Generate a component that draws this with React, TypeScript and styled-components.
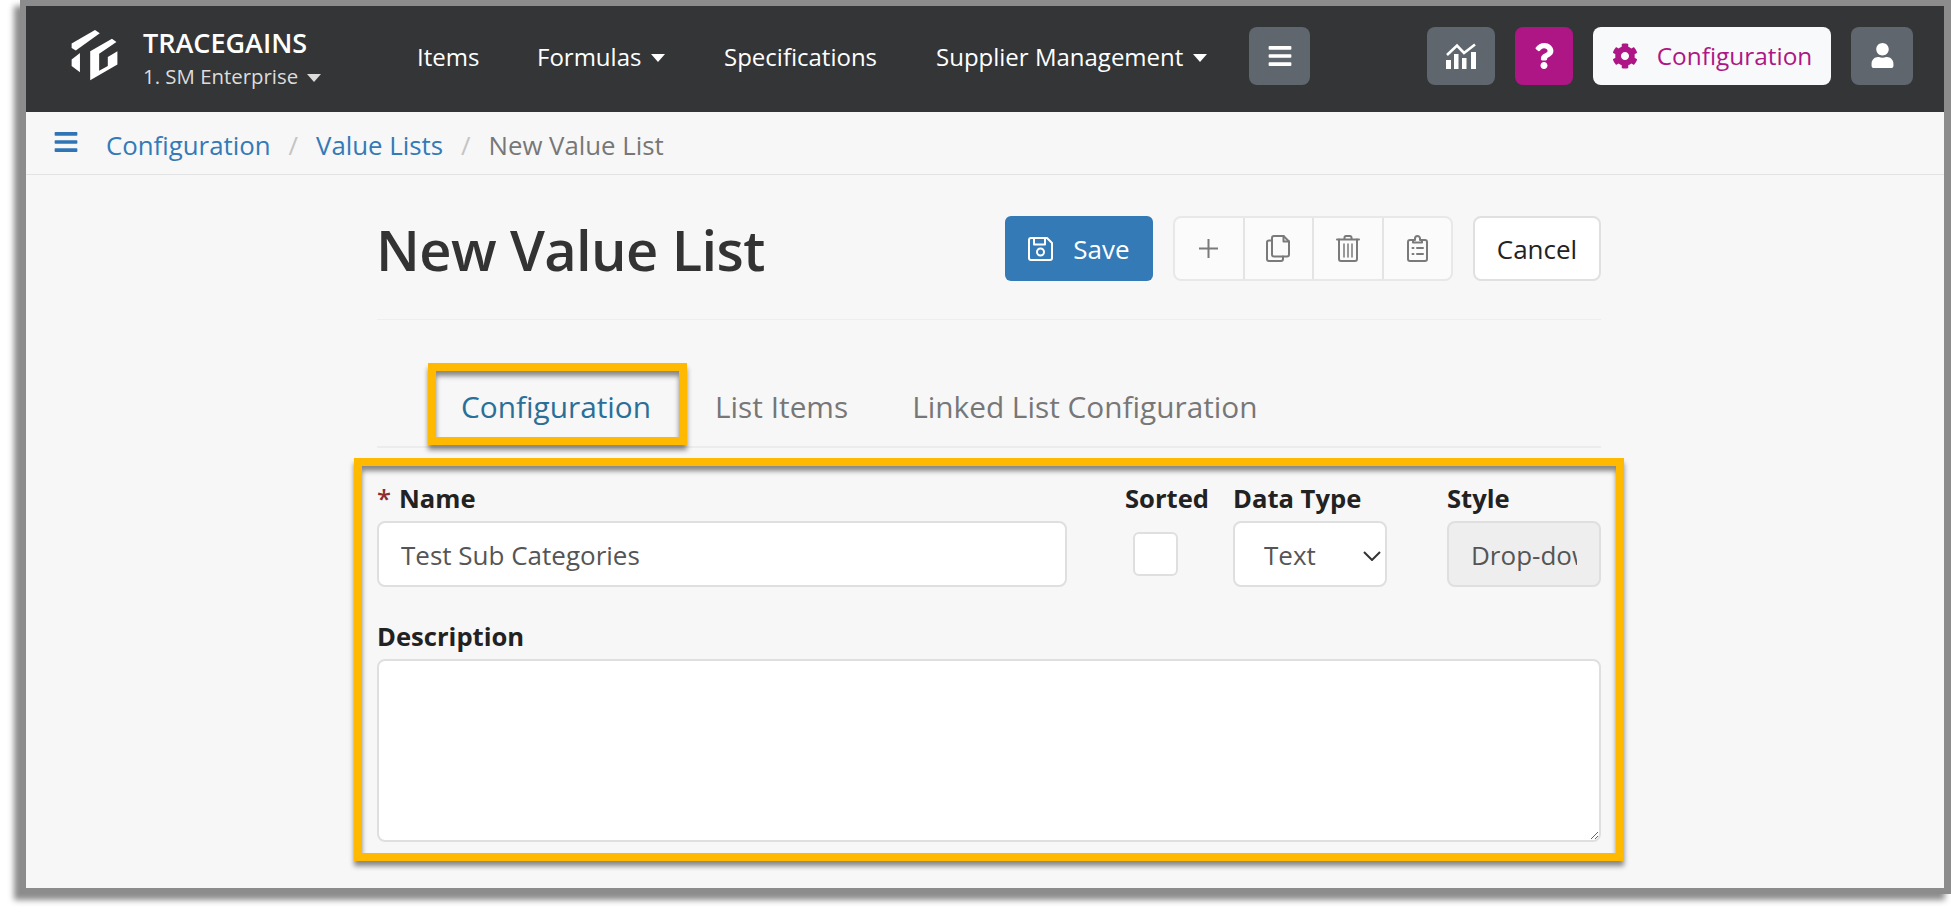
import React from "react";
import styled, { createGlobalStyle } from "styled-components";
import { FaBars, FaCog, FaQuestion, FaUser } from "react-icons/fa";

const font = `"Open Sans", "Noto Sans", sans-serif`;

const GlobalStyle = createGlobalStyle`
  html, body {
    margin: 0;
    background: #fff;
    font-family: ${font};
    overflow: hidden;
  }
`;

const Page = styled.div`
  width: 1951px;
  height: 914px;
  padding-left: 20px;
  box-sizing: border-box;
`;

const Frame = styled.div`
  width: 1931px;
  height: 894px;
  box-sizing: border-box;
  border: 6px solid #8c8c8c;
  border-right-width: 7px;
  background: #f7f7f7;
  box-shadow: -6px 6px 6px rgba(0, 0, 0, 0.45);
  display: flex;
  flex-direction: column;
`;

const Header = styled.header`
  height: 106px;
  flex: none;
  box-sizing: border-box;
  background: #343537;
  display: flex;
  align-items: center;
  color: #fff;
  padding: 0 31px 7px 45px;
`;

const Brand = styled.div`
  display: flex;
  align-items: center;
  gap: 24px;
  width: 346px;
  flex: none;
`;

const BrandText = styled.div`
  display: flex;
  flex-direction: column;
  gap: 3px;
  margin-top: 6px;
`;

const BrandName = styled.div`
  font-size: 27px;
  line-height: 32px;
  font-weight: 600;
`;

const BrandSub = styled.div`
  font-size: 20.4px;
  line-height: 28px;
  color: #dcdcdc;
  display: flex;
  align-items: center;
  gap: 9px;
`;

const Caret = styled.span`
  display: inline-block;
  flex: none;
  width: 0;
  height: 0;
  margin-top: 3px;
  border-left: 7.5px solid transparent;
  border-right: 7.5px solid transparent;
  border-top: 8px solid currentColor;
`;

const Nav = styled.nav`
  display: flex;
  align-items: center;
`;

const NavLink = styled.a<{ $width: number }>`
  width: ${(p) => p.$width}px;
  flex: none;
  margin-top: 2px;
  font-size: 24px;
  color: #fff;
  display: flex;
  align-items: center;
  gap: 10px;
  white-space: nowrap;
`;

const IconButton = styled.button<{ $width: number; $color?: string }>`
  width: ${(p) => p.$width}px;
  height: 58px;
  flex: none;
  border: 0;
  border-radius: 8px;
  padding: 0;
  background: ${(p) => p.$color || "#5f666d"};
  color: #fff;
  display: flex;
  align-items: center;
  justify-content: center;
`;

const HeaderRight = styled.div`
  margin-left: auto;
  display: flex;
  align-items: center;
  gap: 20px;
`;

const ConfigButton = styled.button`
  width: 238px;
  height: 58px;
  border: 0;
  border-radius: 8px;
  background: #f8f9fa;
  color: #ae1685;
  font-family: ${font};
  font-size: 24.4px;
  display: flex;
  align-items: center;
  justify-content: center;
  gap: 19px;
  padding: 0;
`;

const Breadcrumbs = styled.div`
  height: 63px;
  flex: none;
  box-sizing: border-box;
  border-bottom: 1px solid #e3e3e3;
  padding: 4px 0 0 27px;
  display: flex;
  align-items: center;
  font-size: 25.8px;
`;

const CrumbToggle = styled.span`
  color: #2f75b5;
  display: flex;
  margin-right: 27px;
  margin-top: -7px;
`;

const CrumbLink = styled.a`
  color: #337ab7;
`;

const CrumbSep = styled.span`
  color: #c4c4c4;
  margin: 0 18px;
`;

const CrumbCurrent = styled.span`
  color: #777;
`;

const Main = styled.main`
  width: 1224px;
  margin-left: 351px;
  display: flex;
  flex-direction: column;
`;

const TitleRow = styled.div`
  height: 145px;
  box-sizing: border-box;
  border-bottom: 1px solid #eeeeee;
  padding-top: 41px;
  display: flex;
  align-items: flex-start;
  justify-content: space-between;
`;

const Title = styled.h1`
  margin: -3px 0 0 -1px;
  font-size: 56px;
  line-height: 72px;
  font-weight: 600;
  color: #333;
  letter-spacing: -0.6px;
`;

const Actions = styled.div`
  display: flex;
  align-items: stretch;
  height: 65px;
`;

const SaveButton = styled.button`
  width: 148px;
  border: 0;
  border-radius: 6px;
  background: #337ab7;
  color: #fff;
  font-family: ${font};
  font-size: 26px;
  display: flex;
  align-items: center;
  justify-content: center;
  gap: 20px;
  padding: 0;
  margin-right: 20px;
`;

const ToolGroup = styled.div`
  display: flex;
  box-sizing: border-box;
  width: 280px;
  border: 2px solid #e8e8e8;
  border-radius: 8px;
  background: #fbfbfb;
  margin-right: 20px;
`;

const ToolButton = styled.button`
  flex: 1;
  border: 0;
  background: transparent;
  padding: 0;
  display: flex;
  align-items: center;
  justify-content: center;
  & + & {
    border-left: 2px solid #e4e4e4;
  }
`;

const CancelButton = styled.button`
  width: 128px;
  box-sizing: border-box;
  border: 2px solid #e0e0e0;
  border-radius: 8px;
  background: #fff;
  color: #222;
  font-family: ${font};
  font-size: 26px;
  padding: 0;
`;

const Tabs = styled.div`
  height: 128px;
  box-sizing: border-box;
  border-bottom: 2px solid #ececec;
  padding: 58px 0 0 84px;
  display: flex;
  align-items: flex-start;
  gap: 64px;
`;

const Tab = styled.div<{ $active?: boolean }>`
  position: relative;
  font-size: 29.8px;
  line-height: 58px;
  color: ${(p) => (p.$active ? "#2a6f97" : "#777")};
  white-space: nowrap;
`;

const Highlight = styled.div`
  position: absolute;
  box-sizing: border-box;
  border: 8px solid #ffb900;
  box-shadow: 0 5px 5px rgba(0, 0, 0, 0.45), inset 0 5px 5px rgba(0, 0, 0, 0.45);
  pointer-events: none;
`;

const TabHighlight = styled(Highlight)`
  left: -33px;
  right: -36px;
  top: -15px;
  bottom: -9px;
`;

const Form = styled.form`
  position: relative;
  display: flex;
  flex-direction: column;
  padding-top: 35px;
`;

const FormHighlight = styled(Highlight)`
  left: -23px;
  right: -23px;
  top: 10px;
  height: 403px;
`;

const TopFields = styled.div`
  display: flex;
  align-items: flex-start;
`;

const Field = styled.div<{ $width: number; $left?: number }>`
  width: ${(p) => p.$width}px;
  margin-left: ${(p) => p.$left || 0}px;
  flex: none;
  display: flex;
  flex-direction: column;
`;

const Label = styled.label`
  font-size: 25.6px;
  line-height: 32px;
  font-weight: 700;
  color: #222;
  margin-bottom: 6px;
  white-space: nowrap;
`;

const Required = styled.span`
  color: #8f2d2d;
  margin-right: 8px;
  font-weight: 600;
`;

const inputBase = `
  box-sizing: border-box;
  width: 100%;
  height: 66px;
  border: 2px solid #dfdfdf;
  border-radius: 8px;
  background: #fff;
  font-family: ${font};
  font-size: 26px;
  color: #555;
  padding: 2px 22px 0;
  outline: none;
`;

const TextInput = styled.input`
  ${inputBase}
`;

const ReadonlyInput = styled.input`
  ${inputBase}
  background: #eeeeee;
`;

const SelectWrap = styled.div`
  position: relative;
`;

const Select = styled.select`
  ${inputBase}
  appearance: none;
  padding: 2px 0 0 29px;
`;

const SelectChevron = styled.svg`
  position: absolute;
  right: 6px;
  top: 30px;
  pointer-events: none;
`;

const CheckboxWrap = styled.div`
  height: 66px;
  display: flex;
  align-items: center;
  padding-left: 8px;
`;

const Checkbox = styled.input`
  appearance: none;
  margin: 0;
  width: 45px;
  height: 44px;
  box-sizing: border-box;
  border: 2px solid #dfdfdf;
  border-radius: 6px;
  background: #fff;
`;

const DescriptionField = styled.div`
  display: flex;
  flex-direction: column;
  margin-top: 34px;
`;

const TextArea = styled.textarea`
  ${inputBase}
  height: 183px;
  display: block;
`;

const ToolIcon = styled.svg`
  fill: none;
  stroke: #7a7a7a;
  stroke-width: 2;
  stroke-linecap: round;
  stroke-linejoin: round;
`;

const Logo = () => (
  <svg width="48" height="53" viewBox="90 55 150 165" fill="#fff">
    <path d="M92 100 165 58 180 68 105 122 92 114Z" />
    <path d="M92 150 118 130V190L92 170Z" />
    <path d="M150 124 218 85 232 95 178 132V185L205 170V142L235 124V166L150 215Z" />
  </svg>
);

const ChartIcon = () => (
  <svg width="30" height="26" viewBox="0 0 30 26" fill="#fff">
    <path d="M1 12 11 2.500 18 10 29 1.500" fill="none" stroke="#fff" strokeWidth="2.600" />
    <rect x="0" y="17" width="5" height="9" />
    <rect x="8" y="11" width="4.500" height="15" />
    <rect x="16" y="15" width="4.500" height="11" />
    <rect x="25" y="9" width="5" height="17" />
  </svg>
);

const SaveGlyph = () => (
  <svg width="25" height="24" viewBox="0 0 25 24" fill="none" stroke="#fff" strokeWidth="2" strokeLinejoin="round">
    <path d="M3 1H19L24 6V21A2 2 0 0 1 22 23H3A2 2 0 0 1 1 21V3A2 2 0 0 1 3 1Z" />
    <path d="M6 1V7.500H17V1" />
    <circle cx="12.500" cy="15" r="3.500" />
  </svg>
);

const PlusIcon = () => (
  <ToolIcon width="21" height="21" viewBox="0 0 21 21" strokeWidth="2.4">
    <path d="M10.500 1V20M1 10.500H20" strokeLinecap="butt" />
  </ToolIcon>
);

const CopyIcon = () => (
  <ToolIcon width="24" height="27" viewBox="0 0 24 27">
    <path d="M6 19.500V3A2 2 0 0 1 8 1H17.500L23 6.500V19.500A2 2 0 0 1 21 21.500H8A2 2 0 0 1 6 19.500Z" />
    <path d="M17.500 1V6.500H23" />
    <path d="M6 5.500H3A2 2 0 0 0 1 7.500V24A2 2 0 0 0 3 26H15A2 2 0 0 0 17 24V21.500" />
  </ToolIcon>
);

const TrashIcon = () => (
  <ToolIcon width="24" height="27" viewBox="0 0 24 27">
    <path d="M1 4.500H23M8.500 4.500V2.500A1.500 1.500 0 0 1 10 1H14A1.500 1.500 0 0 1 15.500 2.500V4.500" />
    <path d="M3 4.500V24A2 2 0 0 0 5 26H19A2 2 0 0 0 21 24V4.500" />
    <path d="M8 9V22M12 9V22M16 9V22" strokeWidth="1.500" />
  </ToolIcon>
);

const ClipboardIcon = () => (
  <ToolIcon width="21" height="27" viewBox="0 0 21 27">
    <path d="M6 5H3A2 2 0 0 0 1 7V24A2 2 0 0 0 3 26H18A2 2 0 0 0 20 24V7A2 2 0 0 0 18 5H15" />
    <path d="M6 7.500V5H8V3.500A2.500 2.500 0 0 1 13 3.500V5H15V7.500Z" />
    <path d="M5.500 13H6.500M10 13H16M5.500 19H6.500M10 19H16" />
  </ToolIcon>
);

export default function App() {
  return (
    <>
      <GlobalStyle />
      <Page>
        <Frame>
          <Header>
            <Brand>
              <Logo />
              <BrandText>
                <BrandName>TRACEGAINS</BrandName>
                <BrandSub>
                  1. SM Enterprise <Caret />
                </BrandSub>
              </BrandText>
            </Brand>
            <Nav>
              <NavLink $width={120}>Items</NavLink>
              <NavLink $width={187}>
                Formulas <Caret />
              </NavLink>
              <NavLink $width={212}>Specifications</NavLink>
              <NavLink $width={313}>
                Supplier Management <Caret />
              </NavLink>
              <IconButton $width={61}>
                <FaBars size={26} />
              </IconButton>
            </Nav>
            <HeaderRight>
              <IconButton $width={68}>
                <ChartIcon />
              </IconButton>
              <IconButton $width={58} $color="#ae1685">
                <FaQuestion size={26} />
              </IconButton>
              <ConfigButton>
                <FaCog size={26} />
                Configuration
              </ConfigButton>
              <IconButton $width={62}>
                <FaUser size={25} />
              </IconButton>
            </HeaderRight>
          </Header>
          <Breadcrumbs>
            <CrumbToggle>
              <FaBars size={26} />
            </CrumbToggle>
            <CrumbLink>Configuration</CrumbLink>
            <CrumbSep>/</CrumbSep>
            <CrumbLink>Value Lists</CrumbLink>
            <CrumbSep>/</CrumbSep>
            <CrumbCurrent>New Value List</CrumbCurrent>
          </Breadcrumbs>
          <Main>
            <TitleRow>
              <Title>New Value List</Title>
              <Actions>
                <SaveButton type="button">
                  <SaveGlyph />
                  Save
                </SaveButton>
                <ToolGroup>
                  <ToolButton type="button">
                    <PlusIcon />
                  </ToolButton>
                  <ToolButton type="button">
                    <CopyIcon />
                  </ToolButton>
                  <ToolButton type="button">
                    <TrashIcon />
                  </ToolButton>
                  <ToolButton type="button">
                    <ClipboardIcon />
                  </ToolButton>
                </ToolGroup>
                <CancelButton type="button">Cancel</CancelButton>
              </Actions>
            </TitleRow>
            <Tabs>
              <Tab $active>
                Configuration
                <TabHighlight />
              </Tab>
              <Tab>List Items</Tab>
              <Tab>Linked List Configuration</Tab>
            </Tabs>
            <Form>
              <FormHighlight />
              <TopFields>
                <Field $width={690}>
                  <Label>
                    <Required>*</Required>Name
                  </Label>
                  <TextInput defaultValue="Test Sub Categories" />
                </Field>
                <Field $width={108} $left={58}>
                  <Label>Sorted</Label>
                  <CheckboxWrap>
                    <Checkbox type="checkbox" />
                  </CheckboxWrap>
                </Field>
                <Field $width={154}>
                  <Label>Data Type</Label>
                  <SelectWrap>
                    <Select defaultValue="Text">
                      <option>Text</option>
                    </Select>
                    <SelectChevron width="18" height="10" viewBox="0 0 18 10" fill="none" stroke="#333" strokeWidth="2">
                      <path d="M1 1 9 9 17 1" />
                    </SelectChevron>
                  </SelectWrap>
                </Field>
                <Field $width={154} $left={60}>
                  <Label>Style</Label>
                  <ReadonlyInput readOnly defaultValue="Drop-down" />
                </Field>
              </TopFields>
              <DescriptionField>
                <Label>Description</Label>
                <TextArea />
              </DescriptionField>
            </Form>
          </Main>
        </Frame>
      </Page>
    </>
  );
}
